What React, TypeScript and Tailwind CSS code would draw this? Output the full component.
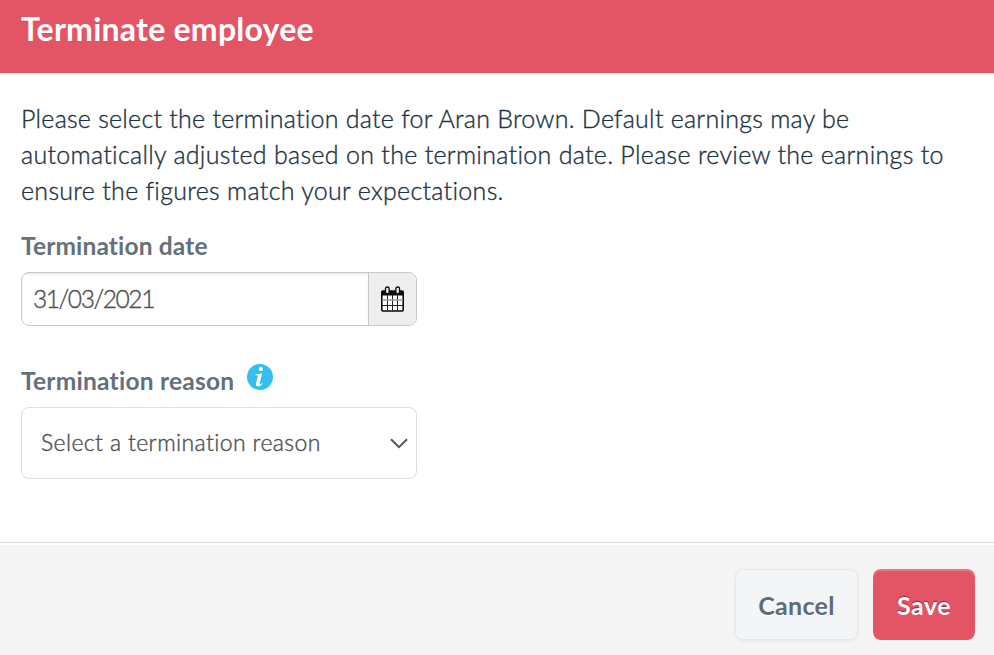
import React from 'react';

interface FieldLabelProps {
  text: string;
  className: string;
}

const FieldLabel: React.FC<FieldLabelProps> = ({ text, className }) => (
  <span className={`text-[24.5px] leading-[36px] font-bold text-[#64707a] whitespace-nowrap ${className}`}>
    {text}
  </span>
);

const CalendarIcon: React.FC = () => (
  <svg width="23" height="26" viewBox="0 0 23 26" fill="none">
    <rect x="0.8" y="5" width="21.4" height="20" rx="1" fill="#fff" stroke="#0b0b0b" strokeWidth="1.6" />
    <path d="M1 5h21v4.5H1z" fill="#0b0b0b" />
    <path d="M6.5 9v16M11.5 9v16M16.5 9v16M1 19.5h21" stroke="#222" strokeWidth="1" />
    <path d="M1 14h21" stroke="#999" strokeWidth="1.5" />
    <rect x="4.5" y="1" width="3.6" height="6.6" rx="1.6" fill="#eee" stroke="#0b0b0b" strokeWidth="1.3" />
    <rect x="14.9" y="1" width="3.6" height="6.6" rx="1.6" fill="#eee" stroke="#0b0b0b" strokeWidth="1.3" />
  </svg>
);

const InfoIcon: React.FC = () => (
  <svg className="mt-px" width="26" height="26" viewBox="0 0 26 26">
    <circle cx="13" cy="13" r="13" fill="#33bff2" />
    <circle cx="13.8" cy="5" r="2.1" fill="#fff" />
    <path
      d="M8.5 10.3c2-.1 4.4-.6 6.7-1.1l-2.6 10.3c-.2.9.1 1.2.7 1 .7-.3 1.2-.8 1.8-1.5l.7.5c-1.3 1.7-2.9 2.8-4.7 2.8-1.8 0-2.6-1.2-2.1-3.1l1.8-6.7c.2-.9-.1-1.3-1.1-1.3H8.2z"
      fill="#fff"
    />
  </svg>
);

const ChevronIcon: React.FC = () => (
  <svg className="mt-px" width="18" height="11" viewBox="0 0 18 11" fill="none">
    <path d="M1 1.2l8 8 8-8" stroke="#555" strokeWidth="2" />
  </svg>
);

const App: React.FC = () => {
  return (
    <div className="flex h-[655px] w-[994px] flex-col overflow-hidden bg-white font-['Lato','Open_Sans',sans-serif]">
      {/* Header */}
      <header className="flex h-[73px] shrink-0 items-start bg-[#e35565] pt-[9px] pl-[21px]">
        <h1 className="text-[32px] leading-[40px] font-bold tracking-[0.25px] whitespace-nowrap text-white">
          Terminate employee
        </h1>
      </header>

      {/* Body */}
      <main className="flex h-[469px] shrink-0 flex-col px-[21px] pt-[27px]">
        <p className="text-[25px] leading-[36px] font-light whitespace-nowrap text-[#1d3342] [-webkit-text-stroke:0.35px_#1d3342]">
          <span className="block tracking-[0.25px]">
            Please select the termination date for Aran Brown. Default earnings may be
          </span>
          <span className="block tracking-[0.3px]">
            automatically adjusted based on the termination date. Please review the earnings to
          </span>
          <span className="block tracking-[0.3px]">ensure the figures match your expectations.</span>
        </p>

        <div className="mt-5 flex flex-col">
          <FieldLabel text="Termination date" className="tracking-[0.15px]" />
          <div className="mt-2 flex h-[54px] w-[396px] overflow-hidden rounded-[8px] border border-[#c8c8c8]">
            <div className="flex flex-1 items-center pl-[11px] text-[24.5px] font-light tracking-[-1.4px] text-[#505050] shadow-[inset_0_2px_2px_rgba(0,0,0,0.07)] [-webkit-text-stroke:0.4px_#505050]">
              31/03/2021
            </div>
            <button className="flex w-12 items-center justify-center border-l border-[#c8c8c8] bg-[#eee]">
              <CalendarIcon />
            </button>
          </div>
        </div>

        <div className="mt-[37px] flex flex-col">
          <div className="flex items-start">
            <FieldLabel text="Termination reason" className="w-[226px] tracking-[0.25px]" />
            <InfoIcon />
          </div>
          <button className="mt-2 flex h-[72px] w-[396px] items-center justify-between rounded-[8px] border border-[#d9e0e5] pr-[8px] pl-[19px] text-[23px] font-light whitespace-nowrap text-[#505050]">
            <span className="pb-0.5 tracking-[0.38px] [-webkit-text-stroke:0.4px_#505050]">
              Select a termination reason
            </span>
            <ChevronIcon />
          </button>
        </div>
      </main>

      {/* Footer */}
      <footer className="mt-auto h-[113px] border-t border-[#d9d9d9] pt-0.5">
        <div className="flex h-full justify-end gap-[15px] bg-[#f4f4f4] pt-6 pr-[19px] text-[25px] font-bold">
          <button className="h-[71px] w-[123px] rounded-[8px] border border-[#e4e8ec] bg-[#f4f5f7] pt-0.5 tracking-[0.3px] text-[#5f6b75] shadow-[0_1px_3px_rgba(0,0,0,0.06)] [text-shadow:0_1px_1px_#fff]">
            Cancel
          </button>
          <button className="h-[71px] w-[102px] rounded-[8px] bg-[#e35565] pt-0.5 tracking-[0.5px] text-white shadow-[inset_0_2px_1px_rgba(255,255,255,0.2)] [text-shadow:0_-1px_1px_rgba(90,0,20,0.6)]">
            Save
          </button>
        </div>
      </footer>
    </div>
  );
};

export default App;
